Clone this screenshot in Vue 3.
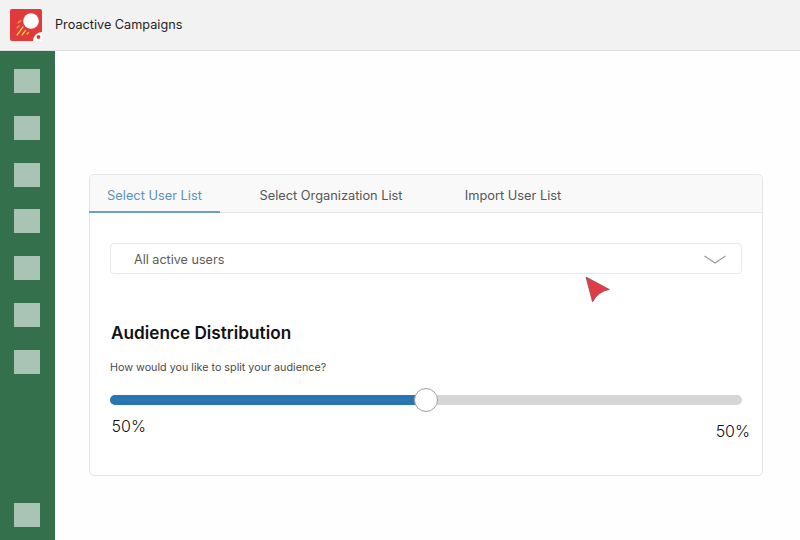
<template>
  <div class="app">
    <header class="topbar">
      <div class="logo">
        <svg width="32" height="32" viewBox="0 0 32 32">
          <rect width="32" height="32" rx="2" fill="#e03a3a" />
          <circle cx="21" cy="12" r="7.8" fill="#fff" />
          <path d="M7 26 L13 18 M12 26 L15.5 21.5 M17 25 L18.5 23.5" stroke="#f5c94e" stroke-width="1.3" stroke-linecap="round" />
          <path d="M8 14 L11 11.5 M7 19 L9 17" stroke="#f5a04e" stroke-width="1.1" stroke-linecap="round" />
          <path d="M32 23 A9 9 0 0 0 23 32 L32 32 Z" fill="#fff" />
          <circle cx="28.5" cy="28" r="1.9" fill="#e03a3a" />
        </svg>
      </div>
      <span class="title">Proactive Campaigns</span>
    </header>

    <div class="body">
      <nav class="sidebar">
        <div v-for="n in 7" :key="n" class="nav-item"></div>
        <div class="nav-item nav-bottom"></div>
      </nav>

      <main class="content">
        <section class="card">
          <div class="tabs">
            <div
              v-for="(tab, index) in tabs"
              :key="tab.label"
              class="tab"
              :class="[tab.cls, { active: index === 0 }]"
            >
              {{ tab.label }}
            </div>
          </div>

          <div class="card-body">
            <div class="select">
              <span>All active users</span>
              <svg width="22" height="9" viewBox="0 0 22 9" fill="none">
                <path d="M0.5 1 L11 8 L21.5 1" stroke="#9a9a9a" stroke-width="1.1" />
              </svg>
            </div>

            <h2 class="heading">Audience Distribution</h2>
            <p class="question">How would you like to split your audience?</p>

            <div class="slider">
              <div class="fill" :style="{ width: split + '%' }"></div>
              <div class="thumb" :style="{ left: split + '%' }"></div>
            </div>
            <div class="values">
              <span>{{ split }}%</span>
              <span>{{ 100 - split }}%</span>
            </div>
          </div>
        </section>

        <svg class="cursor" width="26" height="28" viewBox="0 0 26 28">
          <path d="M1 1 L24.5 13.5 Q13 15.5 7.5 26 Z" fill="#e03c46" stroke="#8d4a50" stroke-width="0.7" />
        </svg>
      </main>
    </div>
  </div>
</template>

<script setup>
const split = 50
const tabs = [
  { label: 'Select User List', cls: 'tab-user' },
  { label: 'Select Organization List', cls: 'tab-org' },
  { label: 'Import User List', cls: 'tab-import' }
]
</script>

<style scoped>
.app {
  width: 800px;
  height: 540px;
  display: flex;
  flex-direction: column;
  overflow: hidden;
  font-family: Inter, "Noto Sans", sans-serif;
  background: #fff;
}

.topbar {
  height: 51px;
  box-sizing: border-box;
  flex-shrink: 0;
  display: flex;
  align-items: center;
  padding: 0 0 1px 10px;
  background: #f2f2f2;
  border-bottom: 1px solid #dedede;
}

.logo {
  width: 32px;
  height: 32px;
  display: flex;
}

.title {
  margin-left: 13px;
  margin-top: -1px;
  font-size: 12.7px;
  color: #1f1f1f;
}

.body {
  flex: 1;
  display: flex;
  min-height: 0;
}

.sidebar {
  width: 55px;
  box-sizing: border-box;
  flex-shrink: 0;
  display: flex;
  flex-direction: column;
  gap: 22.8px;
  padding: 18px 0 13px 14px;
  background: #34704b;
}

.nav-item {
  width: 26px;
  height: 24px;
  flex-shrink: 0;
  background: #a9c3b4;
}

.nav-bottom {
  margin-top: auto;
}

.content {
  flex: 1;
  position: relative;
  padding: 124px 37px 0 34px;
  background: #fefefe;
}

.card {
  height: 302px;
  box-sizing: border-box;
  margin-top: -1px;
  border: 1px solid #e4e4e4;
  border-radius: 5px;
  background: #fff;
}

.tabs {
  height: 37px;
  display: flex;
  background: #f9f9f9;
  border-bottom: 1px solid #e4e4e4;
  border-radius: 5px 5px 0 0;
}

.tab {
  height: 38px;
  box-sizing: border-box;
  display: flex;
  align-items: center;
  justify-content: center;
  padding-top: 2px;
  font-size: 12.8px;
  color: #555;
}

.tab-user {
  width: 131px;
  margin-left: -1px;
}

.tab-org {
  width: 222px;
}

.tab-import {
  width: 140px;
  margin-left: 1px;
}

.tab.active {
  color: #5b93b8;
  padding-top: 4px;
  border-bottom: 2px solid #6d9fbf;
}

.card-body {
  padding: 30px 20px 0 20px;
}

.select {
  height: 31px;
  box-sizing: border-box;
  display: flex;
  align-items: center;
  justify-content: space-between;
  padding: 1px 15px 0 23px;
  border: 1px solid #e8e8e8;
  border-radius: 4px;
  font-size: 12.6px;
  color: #5c5c5c;
}

.heading {
  margin: 49px 0 0 1px;
  font-size: 17.2px;
  line-height: 20px;
  font-weight: 600;
  color: #111;
}

.question {
  margin: 18px 0 0;
  font-size: 10.75px;
  line-height: 14px;
  color: #4a4a4a;
}

.slider {
  position: relative;
  height: 10px;
  margin-top: 20px;
  border-radius: 5px;
  background: #d6d6d6;
}

.fill {
  height: 100%;
  border-radius: 5px 0 0 5px;
  background: #2776b2;
}

.thumb {
  position: absolute;
  top: 50%;
  width: 24px;
  height: 24px;
  box-sizing: border-box;
  transform: translate(-50%, -50%);
  border: 1px solid #9e9e9e;
  border-radius: 50%;
  background: #fff;
}

.values {
  display: flex;
  justify-content: space-between;
  margin: 11px -8px 0 1.5px;
  font-size: 16px;
  font-weight: 300;
  line-height: 21px;
  color: #111;
}

.values span:last-child {
  margin-top: 5px;
}

.cursor {
  position: absolute;
  left: 530px;
  top: 225px;
}
</style>

<style>
html,
body {
  margin: 0;
  background: #fff;
}
</style>
